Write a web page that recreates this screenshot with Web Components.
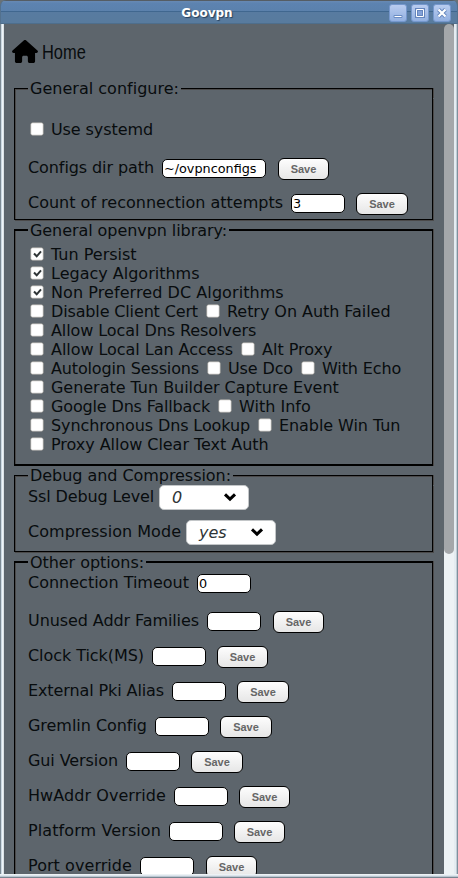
<!DOCTYPE html>
<html lang="en"><head><meta charset="utf-8"><title>Goovpn</title>
<style>html,body{margin:0;height:100%;overflow:hidden}body{font:16px/19px "DejaVu Sans",sans-serif;color:#080c0e;background:#697176}</style></head>
<body>
<goo-window heading="Goovpn">
<goo-home></goo-home>
<goo-group legend="General configure:" w="149" style="height:142px">
<goo-line style="margin-top:22px;height:38px"><goo-check d="-1">Use systemd</goo-check></goo-line>
<goo-field value="~/ovpnconfigs" w="126" style="--w:104px;--g:12px" save label="Configs dir path"></goo-field>
<goo-field value="3" save w="255" style="--b:52px" label="Count of reconnection attempts"></goo-field>
</goo-group>
<goo-group thick legend="General openvpn library:" w="197" style="height:245px">
<goo-line style="margin-top:5px"><goo-check checked>Tun Persist</goo-check></goo-line>
<goo-line><goo-check checked>Legacy Algorithms</goo-check></goo-line>
<goo-line><goo-check checked d="2">Non Preferred DC Algorithms</goo-check></goo-line>
<goo-line><goo-check w="147">Disable Client Cert</goo-check><goo-check d="-1">Retry On Auth Failed</goo-check></goo-line>
<goo-line><goo-check d="-2">Allow Local Dns Resolvers</goo-check></goo-line>
<goo-line><goo-check w="182">Allow Local Lan Access</goo-check><goo-check>Alt Proxy</goo-check></goo-line>
<goo-line><goo-check w="148">Autologin Sessions</goo-check><goo-check w="65">Use Dco</goo-check><goo-check d="-1">With Echo</goo-check></goo-line>
<goo-line><goo-check d="-1">Generate Tun Builder Capture Event</goo-check></goo-line>
<goo-line><goo-check w="159">Google Dns Fallback</goo-check><goo-check>With Info</goo-check></goo-line>
<goo-line><goo-check w="199">Synchronous Dns Lookup</goo-check><goo-check d="-1">Enable Win Tun</goo-check></goo-line>
<goo-line><goo-check d="-1">Proxy Allow Clear Text Auth</goo-check></goo-line>
</goo-group>
<goo-group legend="Debug and Compression:" w="201" style="height:87px">
<goo-select label="Ssl Debug Level" w="126" value="0"></goo-select>
<goo-select label="Compression Mode" w="153" value="yes"></goo-select>
</goo-group>
<goo-group thick legend="Other options:" w="114" style="height:420px">
<goo-field label="Connection Timeout" w="161" value="0" style="margin-top:1px;height:38px"></goo-field>
<goo-field save w="171" label="Unused Addr Families" style="--g:12px"></goo-field>
<goo-field save w="116" label="Clock Tick(MS)"></goo-field>
<goo-field save w="136" label="External Pki Alias" style="--b:52px"></goo-field>
<goo-field save w="119" label="Gremlin Config" style="--b:52px"></goo-field>
<goo-field save w="90" label="Gui Version" style="--b:52px"></goo-field>
<goo-field save w="138" label="HwAddr Override"></goo-field>
<goo-field save w="133" label="Platform Version"></goo-field>
<goo-field save w="104" label="Port override" style="--g:12px"></goo-field>
</goo-group>
</goo-window>
<script>
const define=(name,render)=>customElements.define(name,class extends HTMLElement{
  connectedCallback(){
    if(this.shadowRoot)return;
    const root=this.attachShadow({mode:'open'});
    root.innerHTML=render(n=>this.getAttribute(n)||'',n=>this.hasAttribute(n));
    requestAnimationFrame(()=>this.fit(root.querySelector('.label')));
    this.fit(root.querySelector('.label'));
  }
  // Spreads the label's letters to its requested advance width.
  fit(label){
    if(!label)return;
    const w=+this.getAttribute('w'),d=+this.getAttribute('d');
    if(!w&&!d)return;
    label.style.letterSpacing='0';label.style.width='auto';
    const natural=label.getBoundingClientRect().width,target=w||natural+d;
    const text=this.getAttribute('label')||this.getAttribute('legend')||this.textContent;
    label.style.letterSpacing=(target-natural)/text.length+'px';
    label.style.width=target+'px';
  }
});
define('goo-window',a=>`<style>
:host{display:flex;flex-direction:column;width:458px;height:878px;overflow:hidden}
*{box-sizing:border-box}
header{height:24px;flex:none;display:grid;grid-template-columns:32px 1fr 74px;align-items:center;background:linear-gradient(#555d64 0 1px,#6588b3 1px 2px,#5d83b0 3px,#5b81ac 11px,#40678f 11px 12px,#587ba0 12px,#587b9e 23px,#4e6e8c 23px);border-radius:6px 6px 0 0;border-left:1px solid #53718e;border-right:1px solid #53718e}
h1{grid-column:2;margin:0 0 0 -2px;text-align:center;font:bold 12px/14px "DejaVu Sans",sans-serif;color:#fff;text-shadow:1px 1px 1px #27405c;padding-top:1px}
nav{display:flex;gap:4px;margin:1px 0 0 6px}
svg{display:block;width:18px;height:18px}
main{flex:1;min-height:0;display:flex;border:solid transparent;border-width:0 4px}
.frame{flex:1;min-height:0;display:flex;flex-direction:column;background:linear-gradient(90deg,#7b8993 0 1px,#cbd8e2 1px 2px,#eff5f8 2px 3px,#dbe2e7 3px 4px,#e1e9f0 4px 454px,#e4ecf1 454px 456px,#c0ccd5 456px 457px,#7e909d 457px)}
.foot{height:4px;flex:none;background:linear-gradient(#edf2f5 0 1px,#dce5ec 1px 2px,#bac6d0 2px 3px,#778590 3px)}
.page{flex:1;background:#5d656c;overflow:hidden;padding:0 10px;}
.bar{width:10px;background:linear-gradient(#5d656c 0 100px,#edf2f5 100px)}.thumb{height:530px;background:#a4a7aa;border-radius:5px}
</style><header><h1>${a('heading')}</h1><nav>
${['<path d="M5 11.5h8v2H5z" fill="#fff" stroke="#6b8dc4"/>','<path d="M5.5 5.5h7v7h-7z" fill="#83a1d8" stroke="#6585bd" stroke-width="3"/><path d="M5.5 5.5h7v7h-7z" fill="none" stroke="#fff"/>','<path d="M5.5 5.5l7 7m0-7l-7 7" stroke="#6586bd" stroke-width="4"/><path d="M5.5 5.5l7 7m0-7l-7 7" stroke="#fff" stroke-width="2.2"/>'].map(p=>`<svg viewBox="0 0 18 18"><defs><linearGradient id="b" x2="0" y2="1"><stop stop-color="#bacdf0"/><stop offset="1" stop-color="#91afe0"/></linearGradient></defs><rect x=".5" y=".5" width="17" height="17" rx="2.5" fill="url(#b)" stroke="#7597cc"/>${p}</svg>`).join('')}
</nav></header><div class="frame"><main><div class="page"><slot></slot></div><div class="bar"><div class="thumb"></div></div></main><div class="foot"></div></div>`);
define('goo-home',()=>`<style>:host{display:flex;height:55px;padding-top:16px;box-sizing:border-box;margin-left:-2px;align-items:flex-start}
svg{width:26px;height:23px}span{font:20px/24px "Liberation Sans",sans-serif;transform:scaleX(.82);transform-origin:0 0;margin-left:4px}</style>
<svg viewBox="0 0 576 512"><path d="M575.8 255.5c0 18-15 32.1-32 32.1h-32l.7 160.2c0 2.7-.2 5.4-.5 8.1V472c0 22.1-17.9 40-40 40H392c-22.1 0-40-17.9-40-40v-88c0-17.7-14.3-32-32-32h-64c-17.7 0-32 14.3-32 32v88c0 22.1-17.9 40-40 40h-80c-22.1 0-40-17.9-40-40V287.6H32c-18 0-32-14-32-32.1 0-9 3-17 10-24L266.4 8c7-7 15-8 22-8s15 2 21 7l255.5 224.5c8 7 12 15 10.9 24z"/></svg><span>Home</span>`);
define('goo-group',(a,h)=>`<style>:host{display:flex;flex-direction:column}
.head{display:flex;height:19px;flex:none;white-space:nowrap;--t:${h('thick')?8:9}px}
.head i{width:14px;margin-top:var(--t);border:solid;border-width:${h('thick')?'2px 0 0 1px':'1px 0 0 1px'};border-color:#000;box-shadow:inset 1px ${h('thick')?0:1}px #4b4a4a;flex:none;box-sizing:border-box}
.head i:last-child{flex:1;border-width:${h('thick')?'2px':'1px'} 1px 0 0;box-shadow:inset 0 ${h('thick')?0:1}px #4b4a4a,1px 0 #4b4a4a;margin-right:1px}
span{margin:0 2px}
.body{flex:1;min-height:0;border:solid #000;border-width:0 1px ${h('thick')?2:1}px 1px;margin:0 1px ${h('thick')?0:1}px 0;padding-left:13px;box-shadow:inset 1px 0 #4b4a4a,1px ${h('thick')?0:1}px #4b4a4a}
</style><div class="head"><i></i><span class="label">${a('legend')}</span><i></i></div><div class="body"><slot></slot></div>`);
define('goo-line',()=>`<style>:host{display:flex;height:19px;gap:6px;white-space:nowrap}</style><slot></slot>`);
define('goo-check',(a,h)=>`<style>:host{display:flex}
svg{width:14px;height:14px;margin:2px 7px 0 2px}</style><svg viewBox="0 0 14 14"><rect x=".8" y=".8" width="12.4" height="12.4" rx="1.8" fill="#fff" stroke="#aaa69f" stroke-width=".6"/>${h('checked')?'<path d="M4 6.5l2.7 2.8L11 4.3" fill="none" stroke="#2e3436" stroke-width="2"/>':''}</svg><span class="label"><slot></slot></span>`);
define('goo-field',(a,h)=>`<style>:host{display:flex;height:35px;align-items:flex-start;white-space:nowrap}
input,button{box-sizing:border-box;border:1px solid #000}
input{margin:1px 0 0 8px;width:var(--w,54px);height:19px;border-radius:5px;background:#fff;padding:0 1px;font:12.8px/16px "DejaVu Sans",sans-serif;color:#000}
button{margin:0 0 0 var(--g,11px);width:var(--b,51px);height:22px;border-radius:6px;padding:0;background:linear-gradient(#fdfdfd,#e6e6e6);font:bold 11px/18px "Liberation Sans",sans-serif;color:#666}
</style><span class="label">${a('label')}</span><input value="${a('value')}">${h('save')?'<button>Save</button>':''}`);
define('goo-select',a=>`<style>:host{display:flex;height:35px;white-space:nowrap}span{padding-top:2px}
div{box-sizing:border-box;width:90px;height:25px;margin-left:5px;border:1px solid #c3c6c8;border-radius:5px;background:#fff;display:flex;align-items:center;justify-content:space-between;padding:0 11px 0 12px;color:#2e3436;font-style:italic}
svg{width:14px;height:10px}</style><span class="label">${a('label')}</span><div>${a('value')}<svg viewBox="0 0 14 10"><path d="M2 1.4l5 4.8 5-4.8" fill="none" stroke="#000" stroke-width="3"/></svg></div>`);
</script></body></html>
